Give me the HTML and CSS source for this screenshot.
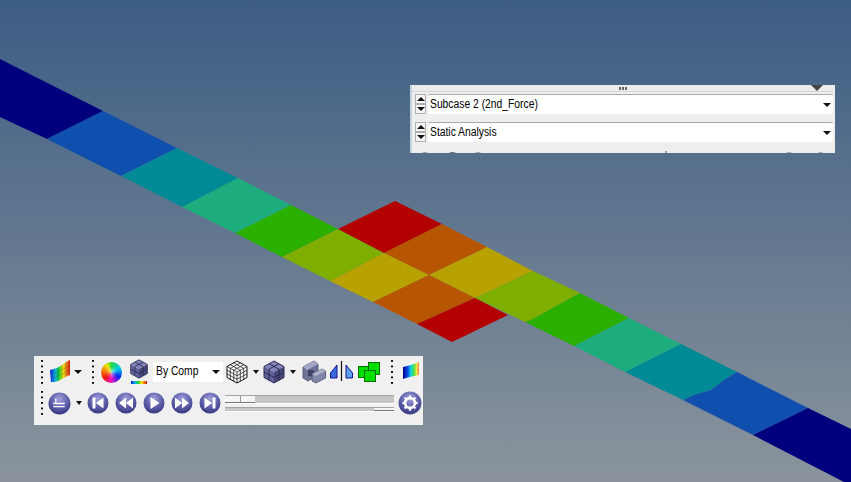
FILE: index.html
```html
<!DOCTYPE html>
<html lang="en">
<head>
    <meta charset="UTF-8">
    <title>Contour view</title>
    <link rel="stylesheet" href="styles.css">
</head>
<body>
    <!-- Shared icon definitions -->
    <svg class="defs" width="0" height="0">
        <defs>
            <radialGradient id="btnFill" cx="50%" cy="30%" r="75%">
                <stop offset="0" stop-color="#a0a0dc"/>
                <stop offset="0.55" stop-color="#5c5ca8"/>
                <stop offset="1" stop-color="#32327a"/>
            </radialGradient>
            <linearGradient id="rainbow" x1="0" y1="0" x2="1" y2="0">
                <stop offset="0" stop-color="#0818e0"/>
                <stop offset="0.25" stop-color="#08b4e8"/>
                <stop offset="0.45" stop-color="#10d030"/>
                <stop offset="0.65" stop-color="#f4e810"/>
                <stop offset="0.85" stop-color="#f47010"/>
                <stop offset="1" stop-color="#c81818"/>
            </linearGradient>
            <linearGradient id="rainbowSmall" x1="0" y1="0" x2="1" y2="0">
                <stop offset="0" stop-color="#00008c"/>
                <stop offset="0.3" stop-color="#0a50e8"/>
                <stop offset="0.5" stop-color="#10d8e0"/>
                <stop offset="0.7" stop-color="#50e040"/>
                <stop offset="0.85" stop-color="#f0e840"/>
                <stop offset="1" stop-color="#f08050"/>
            </linearGradient>
            <symbol id="cube" viewBox="0 0 24 24">
                <polygon points="12,1 22,6.5 12,12 2,6.5" fill="#8484bc"/>
                <polygon points="2,6.5 12,12 12,23 2,17.5" fill="#62629a"/>
                <polygon points="22,6.5 12,12 12,23 22,17.5" fill="#474778"/>
                <path d="M7 3.7 17 9.2M17 3.7 7 9.2M7 9.2V20.2M17 9.2V20.2M2 12 12 17.5 22 12" fill="none" stroke="#2b2b50" stroke-width="1"/>
                <polygon points="12,1 22,6.5 22,17.5 12,23 2,17.5 2,6.5" fill="none" stroke="#2b2b50" stroke-width="1"/>
            </symbol>
            <symbol id="wirecube" viewBox="0 0 24 24">
                <polygon points="12,1 22,6.5 22,17.5 12,23 2,17.5 2,6.5" fill="#fafafa" stroke="#111" stroke-width="1"/>
                <path d="M2 6.5 12 12 22 6.5M12 12V23M5.3 4.7 15.3 10.2M8.7 2.9 18.7 8.4M18.7 4.7 8.7 10.2M15.3 2.9 5.3 8.4M5.3 8.4V19.4M8.7 10.2V21.2M15.3 10.2V21.2M18.7 8.4V19.4M2 10.2 12 15.7 22 10.2M2 13.9 12 19.3 22 13.9" fill="none" stroke="#111" stroke-width="0.7"/>
            </symbol>
            <symbol id="back" viewBox="0 0 22 22"><circle cx="11" cy="11" r="10.5" fill="url(#btnFill)"/></symbol>
        </defs>
    </svg>

    <!-- Model: strip elements on the canvas -->
    <svg class="model" width="851" height="482" viewBox="0 0 851 482">
        <polygon fill="#00007f" points="0,59 103,111 47,139 0,117"/>
        <polygon fill="#0f4fae" points="103,111 177,148 121,176 47,139"/>
        <polygon fill="#008a96" points="177,148 238,178 182,207 121,176"/>
        <polygon fill="#1dac7d" points="238,178 291,205 235,233 182,207"/>
        <polygon fill="#2bb000" points="291,205 338,229 282,257 235,233"/>
        <polygon fill="#7eae00" points="338,229 384,253 330,281 282,257"/>
        <polygon fill="#b30000" points="395,201 442,224 384,253 338,229"/>
        <polygon fill="#b85500" points="442,224 487,247 429,275 384,253"/>
        <polygon fill="#b8a200" points="487,247 533,271 475,298 429,275"/>
        <polygon fill="#7eae00" points="533,271 580,293 531,320 525,322 475,298"/>
        <polygon fill="#2bb000" points="580,293 629,318 574,346 525,322 531,320"/>
        <polygon fill="#b8a200" points="384,253 429,275 373,302 330,281"/>
        <polygon fill="#b85500" points="429,275 475,298 417,324 373,302"/>
        <polygon fill="#b30000" points="475,298 508,315 452,342 417,324"/>
        <polygon fill="#1dac7d" points="629,318 681,344 625,372 574,346"/>
        <polygon fill="#008a96" points="681,344 737,372 724,380 711,390 694,395 683,400 625,372"/>
        <polygon fill="#0f4fae" points="737,372 808,408 753,435 683,400 694,395 711,390 724,380"/>
        <polygon fill="#00007f" points="808,408 851,429 851,482 844,482 753,435"/>
    </svg>

    <!-- Result selector panel -->
    <div class="selector">
        <div class="selector-head"><span class="grip-dots"></span></div>
        <div class="pin"></div>
        <div class="selector-row">
            <div class="spin">
                <span class="spin-btn"><i class="tri-up"></i></span>
                <span class="spin-btn"><i class="tri-down"></i></span>
            </div>
            <div class="field"><span class="label">Subcase 2 (2nd_Force)</span><i class="tri-down"></i></div>
        </div>
        <div class="selector-row">
            <div class="spin">
                <span class="spin-btn"><i class="tri-up"></i></span>
                <span class="spin-btn"><i class="tri-down"></i></span>
            </div>
            <div class="field"><span class="label">Static Analysis</span><i class="tri-down"></i></div>
        </div>
        <div class="peek">
            <i class="peek-a"></i><i class="peek-b"></i><i class="peek-c"></i>
            <i class="peek-tick"></i><i class="peek-d"></i><i class="peek-e"></i>
        </div>
    </div>

    <!-- Animation toolbar -->
    <div class="toolbar">
        <div class="bar bar-top">
            <span class="grip"></span>
            <svg class="ic-contour" width="22" height="24" viewBox="0 0 22 24">
                <path d="M1 10C6 9 10 7 13 5 16 3 18 1 21 0V15C17 16 15 18 11 20 7 22 5 22 2 22Z" fill="url(#rainbow)"/>
                <path d="M5 9.500V22M9 8V21M13 5V19M17 2.500V16.500M1.300 14C8 13 15 9 21 5M1.700 18C8 17 15 13 21 10" fill="none" stroke="#333" stroke-width="0.6" opacity="0.45"/>
            </svg>
            <i class="tri-down arrow-a"></i>
            <span class="grip grip-b"></span>
            <span class="wheel"></span>
            <svg class="ic-stack" width="24" height="26" viewBox="0 0 24 26">
                <use href="#cube" x="1" y="0" width="22" height="20"/>
                <rect x="4" y="22" width="16" height="3" fill="url(#rainbow)"/>
            </svg>
            <div class="combo"><span class="label">By Comp</span><i class="tri-down"></i></div>
            <svg class="ic-wire" width="24" height="24"><use href="#wirecube" width="24" height="24"/></svg>
            <i class="tri-down arrow-b"></i>
            <svg class="ic-solid" width="24" height="24"><use href="#cube" width="24" height="24"/></svg>
            <i class="tri-down arrow-b"></i>
            <svg class="ic-pair" width="24" height="24" viewBox="0 0 24 24">
                <polygon points="1,7 12,1 16,4 16,15 6,21 1,18" fill="#6f7398" stroke="#4a4d70" stroke-width="0.8"/>
                <polygon points="1,7 12,1 16,4 5,10" fill="#a5a8c4"/>
                <rect x="6" y="10" width="6" height="6" fill="#3f4264"/>
                <polygon points="10,14 20,9 23.500,11 23.500,18 14,23 10,21" fill="#8286a8" stroke="#4a4d70" stroke-width="0.8"/>
                <polygon points="10,14 20,9 23.500,11 14,16" fill="#b0b3cc"/>
            </svg>
            <svg class="ic-mirror" width="24" height="24" viewBox="0 0 24 24">
                <polygon points="7,5 7,18 0.500,18 0.500,13" fill="#3a6ae0" stroke="#14148c"/>
                <polygon points="16,5 16,18 22.500,18 22.500,13" fill="#5ca0ee" stroke="#14148c"/>
                <path d="M11.500 1V21" stroke="#111" stroke-width="1.200"/>
            </svg>
            <svg class="ic-green" width="22" height="22" viewBox="0 0 22 22">
                <rect x="0.500" y="5.500" width="11" height="11" fill="#00e000" stroke="#066c06"/>
                <rect x="10.500" y="1.500" width="11" height="12" fill="#00e000" stroke="#066c06"/>
                <rect x="6.500" y="9.500" width="11" height="11" fill="#00e000" stroke="#066c06"/>
            </svg>
            <span class="grip grip-c"></span>
            <svg class="ic-contour-small" width="18" height="20" viewBox="0 0 18 20">
                <path d="M1 5C6 4 12 2 17 0V13C12 14 6 15 1 17Z" fill="url(#rainbowSmall)"/>
            </svg>
        </div>
        <div class="bar bar-bottom">
            <span class="grip"></span>
            <svg class="btn-big" width="23" height="23" viewBox="0 0 22 22">
                <use href="#back" width="22" height="22"/>
                <path d="M7.500 6V11M5 11H16M5 14H16" stroke="#fff" stroke-width="1.300" fill="none"/>
            </svg>
            <i class="tri-down arrow-c"></i>
            <svg class="btn" width="22" height="22" viewBox="0 0 22 22">
                <use href="#back" width="22" height="22"/>
                <path d="M5.500 5.500H8.500V16.500H5.500ZM16.500 5.500V16.500L9 11Z" fill="#fff"/>
            </svg>
            <svg class="btn" width="22" height="22" viewBox="0 0 22 22">
                <use href="#back" width="22" height="22"/>
                <path d="M11 5.500V16.500L4 11ZM18 5.500V16.500L11 11Z" fill="#fff"/>
            </svg>
            <svg class="btn" width="22" height="22" viewBox="0 0 22 22">
                <use href="#back" width="22" height="22"/>
                <path d="M7.500 5V17L16.500 11Z" fill="#fff"/>
            </svg>
            <svg class="btn" width="22" height="22" viewBox="0 0 22 22">
                <use href="#back" width="22" height="22"/>
                <path d="M4 5.500V16.500L11 11ZM11 5.500V16.500L18 11Z" fill="#fff"/>
            </svg>
            <svg class="btn" width="22" height="22" viewBox="0 0 22 22">
                <use href="#back" width="22" height="22"/>
                <path d="M16.500 5.500H13.500V16.500H16.500ZM5.500 5.500V16.500L13 11Z" fill="#fff"/>
            </svg>
            <div class="sliders">
                <div class="slider slider-big"><span class="thumb thumb-big"></span></div>
                <div class="slider slider-small"><span class="thumb thumb-small"></span></div>
            </div>
            <svg class="btn-gear" width="24" height="24" viewBox="0 0 22 22">
                <use href="#back" width="22" height="22"/>
                <circle cx="11" cy="11" r="4.500" fill="none" stroke="#fff" stroke-width="2.400"/>
                <path d="M11 4V7M11 15V18M4 11H7M15 11H18M6 6 8.200 8.200M13.800 13.800 16 16M16 6 13.800 8.200M8.200 13.800 6 16" stroke="#fff" stroke-width="2"/>
            </svg>
        </div>
    </div>
</body>
</html>
```

FILE: styles.css
```css
/* Page and canvas */
html, body {
    margin: 0;
    padding: 0;
    height: 100%;
}

body {
    width: 851px;
    height: 482px;
    overflow: hidden;
    position: relative;
    background: linear-gradient(#3c5d84, #8b949c);
    font-family: "Liberation Sans", Arial, sans-serif;
    color: #000;
}

.defs {
    position: absolute;
}

.model {
    position: absolute;
    left: 0;
    top: 0;
}

/* Small triangles used on every arrow */
i {
    display: block;
    font-style: normal;
}

.tri-down {
    width: 0;
    height: 0;
    border-left: 4px solid transparent;
    border-right: 4px solid transparent;
    border-top: 4px solid #111;
}

.tri-up {
    width: 0;
    height: 0;
    border-left: 4px solid transparent;
    border-right: 4px solid transparent;
    border-bottom: 4px solid #111;
}

/* Text in the combo boxes is narrower than the font */
.label {
    display: inline-block;
    font-size: 12px;
    line-height: 14px;
    margin-bottom: 2px;
    white-space: nowrap;
    transform: scaleX(0.86);
    transform-origin: left center;
}

/* Result selector panel */
.selector {
    position: absolute;
    left: 410px;
    top: 85px;
    width: 425px;
    height: 68px;
    box-sizing: border-box;
    background-color: #eeeeee;
    border-left: 2px solid #c4d2e2;
    overflow: hidden;
}

.selector-head {
    height: 6px;
    margin: 0 2px 2px 0;
    background-color: #eaecee;
    border-bottom: 1px solid #d8d8d8;
    display: flex;
    justify-content: center;
}

.grip-dots {
    width: 8px;
    height: 3px;
    margin-top: 2px;
    background: repeating-linear-gradient(90deg, #666 0 2px, transparent 2px 3px);
}

.pin {
    position: absolute;
    top: 0;
    right: 12px;
    width: 0;
    height: 0;
    border-left: 6px solid transparent;
    border-right: 6px solid transparent;
    border-top: 6px solid #444;
}

.selector-row {
    display: flex;
    gap: 2px;
    height: 20px;
    margin-bottom: 8px;
    padding-left: 3px;
}

.spin {
    width: 11px;
    display: flex;
    flex-direction: column;
}

.spin-btn {
    height: 10px;
    box-sizing: border-box;
    background-color: #f4f4f4;
    border: 1px solid #b0b0b0;
    display: flex;
    align-items: center;
    justify-content: center;
}

.field {
    flex: 1;
    margin-right: 2px;
    box-sizing: border-box;
    background-color: #fff;
    border-top: 1px solid #a8a8a8;
    border-radius: 2px;
    padding: 0 2px 0 2px;
    display: flex;
    align-items: center;
    justify-content: space-between;
}

.peek {
    position: relative;
    height: 4px;
    margin-top: -4px;
}

.peek i {
    position: absolute;
    top: 6px;
    height: 8px;
    border-radius: 50%;
    background-color: #a0a0a0;
}

.peek .peek-a { left: 8px; width: 10px; }
.peek .peek-b { left: 35px; width: 11px; background-color: #6a6a6a; }
.peek .peek-c { left: 61px; width: 10px; }
.peek .peek-tick { left: 253px; top: 5px; width: 2px; border-radius: 0; }
.peek .peek-d { left: 373px; width: 8px; }
.peek .peek-e { left: 405px; width: 7px; }

/* Animation toolbar */
.toolbar {
    position: absolute;
    left: 34px;
    top: 356px;
    width: 389px;
    height: 69px;
    background-color: #f0f0f0;
}

.bar {
    display: flex;
    align-items: center;
    padding-left: 6px;
}

.bar-top {
    height: 30px;
    margin-top: 1px;
}

.bar-bottom {
    height: 28px;
    margin-top: 2px;
}

.grip {
    width: 3px;
    height: 24px;
    background: linear-gradient(#111 2px, transparent 2px) center top / 2px 5.5px repeat-y;
}

.ic-contour { margin-left: 6px; }
.arrow-a { margin-left: 3px; }
.grip-b { margin-left: 9px; }

.wheel {
    width: 21px;
    height: 21px;
    margin-left: 7px;
    border-radius: 50%;
    background:
        radial-gradient(circle, rgba(255, 255, 255, 0.55) 0, rgba(255, 255, 255, 0) 40%),
        conic-gradient(#20d840, #00d0e8 60deg, #0828f0 120deg, #f010c0 180deg, #f01818 230deg, #f89000 290deg, #e8e810 330deg, #20d840);
}

.ic-stack { margin-left: 5px; }

.combo {
    width: 70px;
    height: 20px;
    margin-left: 2px;
    box-sizing: border-box;
    background-color: #fff;
    border-radius: 2px;
    padding: 0 3px 0 3px;
    display: flex;
    align-items: center;
    justify-content: space-between;
}

.ic-wire { margin-left: 2px; }
.arrow-b { margin: 0 3px 0 4px; border-left-width: 3px; border-right-width: 3px; }
.ic-pair { margin-left: 3px; }
.ic-mirror { margin-left: 4px; }
.ic-green { margin-left: 4px; }
.grip-c { margin-left: 10px; }
.ic-contour-small { margin-left: 9px; }

.btn-big { margin-left: 5px; }
.arrow-c { margin: 0 5px 0 5px; border-left-width: 3px; border-right-width: 3px; }
.btn { margin-right: 6px; }

.sliders {
    width: 169px;
    margin-left: -2px;
    display: flex;
    flex-direction: column;
    gap: 3px;
}

.slider {
    background-color: #c6c6c6;
    border-top: 1px solid #a4a4a4;
    border-bottom: 1px solid #fff;
    display: flex;
}

.slider-big { height: 7px; }
.slider-small { height: 3px; justify-content: flex-end; }

.thumb {
    display: block;
    background-color: #f4f4f4;
    border-bottom: 1px solid #777;
}

.thumb-big {
    width: 30px;
    background: linear-gradient(90deg, #f4f4f4 15px, #999 15px, #999 16px, #f4f4f4 16px);
}

.thumb-small { width: 20px; }

.btn-gear { margin-left: 4px; }
```
